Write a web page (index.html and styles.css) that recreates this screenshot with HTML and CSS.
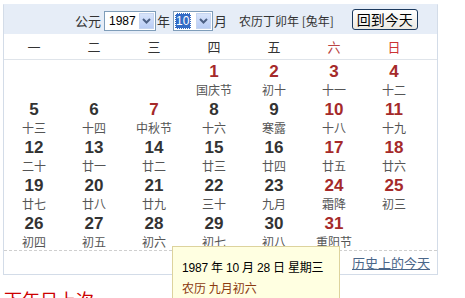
FILE: index.html
```html
<!DOCTYPE html>
<html lang="zh-CN">
<head>
  <meta charset="UTF-8" />
  <title>万年历</title>
  <link rel="stylesheet" href="styles.css">
</head>
<body>
  <div class="calendar">
    <div class="cal-header">
      <span class="label">公元</span>
      <span class="select year-select">
        <span class="select-value">1987</span>
        <span class="select-arrow"><svg width="9" height="6" viewBox="0 0 9 6"><path d="M1 1 L4.5 4.5 L8 1" fill="none" stroke="#4d6185" stroke-width="2"/></svg></span>
      </span>
      <span class="label">年</span>
      <span class="select month-select">
        <span class="select-value selected">10</span>
        <span class="select-arrow"><svg width="9" height="6" viewBox="0 0 9 6"><path d="M1 1 L4.5 4.5 L8 1" fill="none" stroke="#4d6185" stroke-width="2"/></svg></span>
      </span>
      <span class="label">月</span>
      <span class="lunar-year">农历丁卯年 [兔年]</span>
      <button class="today-btn">回到今天</button>
    </div>

    <div class="week-row">
      <div>一</div><div>二</div><div>三</div><div>四</div><div>五</div>
      <div class="sat">六</div><div class="sun">日</div>
    </div>

    <div class="days">
      <div class="day empty"></div>
      <div class="day empty"></div>
      <div class="day empty"></div>
      <div class="day red"><b>1</b><span>国庆节</span></div>
      <div class="day red"><b>2</b><span>初十</span></div>
      <div class="day red"><b>3</b><span>十一</span></div>
      <div class="day red"><b>4</b><span>十二</span></div>

      <div class="day"><b>5</b><span>十三</span></div>
      <div class="day"><b>6</b><span>十四</span></div>
      <div class="day red"><b>7</b><span>中秋节</span></div>
      <div class="day"><b>8</b><span>十六</span></div>
      <div class="day"><b>9</b><span>寒露</span></div>
      <div class="day red"><b>10</b><span>十八</span></div>
      <div class="day red"><b>11</b><span>十九</span></div>

      <div class="day"><b>12</b><span>二十</span></div>
      <div class="day"><b>13</b><span>廿一</span></div>
      <div class="day"><b>14</b><span>廿二</span></div>
      <div class="day"><b>15</b><span>廿三</span></div>
      <div class="day"><b>16</b><span>廿四</span></div>
      <div class="day red"><b>17</b><span>廿五</span></div>
      <div class="day red"><b>18</b><span>廿六</span></div>

      <div class="day"><b>19</b><span>廿七</span></div>
      <div class="day"><b>20</b><span>廿八</span></div>
      <div class="day"><b>21</b><span>廿九</span></div>
      <div class="day"><b>22</b><span>三十</span></div>
      <div class="day"><b>23</b><span>九月</span></div>
      <div class="day red"><b>24</b><span>霜降</span></div>
      <div class="day red"><b>25</b><span>初三</span></div>

      <div class="day"><b>26</b><span>初四</span></div>
      <div class="day"><b>27</b><span>初五</span></div>
      <div class="day"><b>28</b><span>初六</span></div>
      <div class="day"><b>29</b><span>初七</span></div>
      <div class="day"><b>30</b><span>初八</span></div>
      <div class="day red"><b>31</b><span>重阳节</span></div>
      <div class="day empty"></div>
    </div>

    <div class="cal-footer">
      <a href="#" class="history-link">历史上的今天</a>
    </div>
  </div>

  <div class="section-title">下年日上次</div>

  <!-- tooltip for the hovered day (28) -->
  <div class="tooltip">
    <div class="tip-date">1987 年 10 月 28 日 星期三</div>
    <div class="tip-lunar">农历 九月初六</div>
  </div>
</body>
</html>
```

FILE: styles.css
```css
body {
  margin: 0;
  font-family: "Noto Sans CJK SC", "Liberation Sans", sans-serif;
  font-size: 12px;
  color: #333;
  background: #fff;
}
.calendar {
  margin: 4px 0 0 3px;
  width: 433px;
  border: 1px solid #d3dce8;
  border-top-color: #e6edf7;
}
.cal-header {
  height: 28px;
  background-color: #e6edf7;
  display: flex;
  align-items: center;
  padding-left: 70px;
  padding-top: 1px;
}
.label {
  font-size: 13px;
  color: #333;
  margin: 0 3px 0 1px;
}
.select {
  display: flex;
  align-items: center;
  height: 18px;
  border: 1px solid #7f9db9;
  background: #fff;
  padding: 0 1px;
  margin-top: 2px;
}
.year-select {
  width: 48px;
}
.month-select {
  width: 36px;
}
.select-value {
  flex: 1;
  font-family: "Liberation Sans", sans-serif;
  font-size: 12px;
  padding-left: 3px;
  color: #000;
}
.select-value.selected {
  flex: none;
  width: 15px;
  padding-left: 1px;
  margin-right: 2px;
  background: #316ac5;
  color: #fff;
  outline: 1px dotted #fff;
  outline-offset: -1px;
  line-height: 16px;
}
.select-arrow {
  width: 15px;
  height: 16px;
  background: linear-gradient(#d8e4fb, #b9cdf5);
  border: 1px solid #c6d5f0;
  box-sizing: border-box;
  display: flex;
  align-items: center;
  justify-content: center;
}
.month-select .select-arrow {
  margin-left: auto;
}
.lunar-year {
  font-size: 12px;
  margin-left: 9px;
  color: #333;
}
.today-btn {
  margin-left: 18px;
  margin-top: -2px;
  height: 21px;
  padding: 0 4px;
  font-family: "Noto Sans CJK SC", sans-serif;
  font-size: 14px;
  line-height: 17px;
  color: #000;
  border: 1px solid #1c3a5e;
  border-radius: 3px;
  background: linear-gradient(#ffffff, #ece9e2);
  cursor: pointer;
}
.week-row {
  display: grid;
  grid-template-columns: repeat(7, 60px);
  height: 25px;
  align-items: center;
  border-bottom: 1px solid #dfe4ea;
  font-size: 13px;
  color: #333;
  text-align: center;
}
.week-row .sat {
  color: #b44;
}
.week-row .sun {
  color: #c33;
}
.days {
  display: grid;
  grid-template-columns: repeat(7, 60px);
  grid-auto-rows: 38px;
  border-bottom: 1px dashed #cfcfcf;
}
.day {
  display: flex;
  flex-direction: column;
  align-items: center;
  padding-top: 2px;
}
.day b {
  font-family: "Liberation Sans", sans-serif;
  font-size: 17px;
  line-height: 20px;
  color: #333;
}
.day span {
  font-size: 12px;
  line-height: 15px;
  color: #555;
}
.day.red b {
  color: #a52a2a;
}
.cal-footer {
  height: 23px;
  display: flex;
  align-items: center;
  padding-left: 348px;
}
.history-link {
  font-size: 13px;
  color: #4a6689;
  text-decoration: underline;
}
.section-title {
  margin: 14px 0 0 4px;
  font-size: 18px;
  color: #c00;
  line-height: 20px;
}
.tooltip {
  position: absolute;
  left: 172px;
  top: 246px;
  width: 168px;
  height: 52px;
  padding: 12px 0 0 9px;
  background: #ffffe1;
  border: 1px solid #ddd39d;
  border-bottom: none;
  box-sizing: border-box;
  white-space: nowrap;
}
.tip-date {
  font-family: "Liberation Sans", "Noto Sans CJK SC", sans-serif;
  font-size: 12px;
  letter-spacing: -0.2px;
  color: #000;
  line-height: 18px;
}
.tip-lunar {
  margin-top: 2px;
  font-size: 12px;
  color: #8b3a10;
  line-height: 18px;
}
```
